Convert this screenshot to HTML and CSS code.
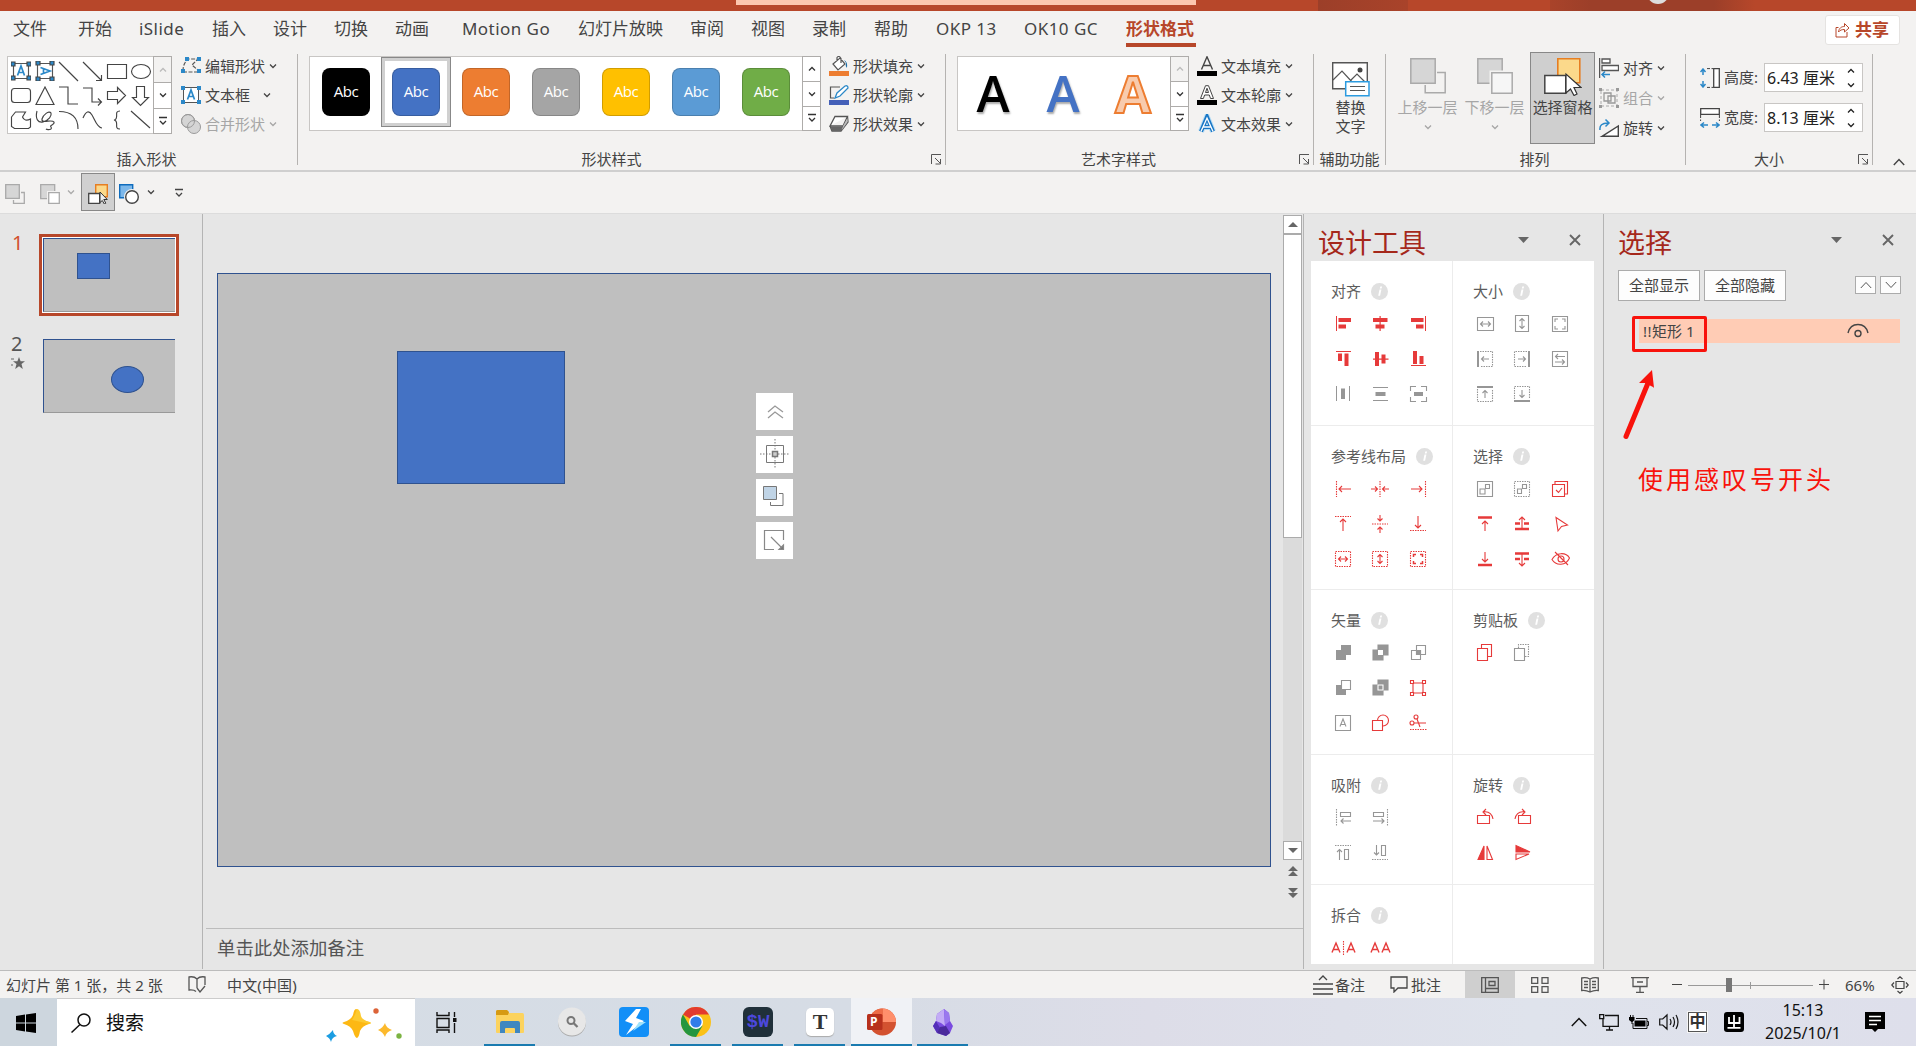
FILE: index.html
```html
<!DOCTYPE html>
<html lang="zh-CN">
<head>
<meta charset="utf-8">
<title>PowerPoint</title>
<link rel="stylesheet" href="styles.css">
</head>
<body>
<svg class="defs" width="0" height="0">
  <symbol id="chev" viewBox="0 0 8 8"><path d="M1 2.5l3 3 3-3" fill="none" stroke="currentColor" stroke-width="1.3"/></symbol>
  <symbol id="up" viewBox="0 0 8 8"><path d="M1 5.5l3-3 3 3" fill="none" stroke="currentColor" stroke-width="1.3"/></symbol>
  <symbol id="more" viewBox="0 0 10 10"><path d="M1 1.5h8M2 5l3 3 3-3" fill="none" stroke="currentColor" stroke-width="1.3"/></symbol>
  <symbol id="launch" viewBox="0 0 11 11"><path d="M.5 10V.5H10M4 4l5 5M9.500 5v5h-5" fill="none" stroke="#555"/></symbol>
  <symbol id="tbox" viewBox="0 0 20 20"><path d="M2.500 2.500h15v15h-15z" fill="#fff" stroke="#555"/><path d="M6.500 14.500L10 5l3.500 9.500M7.700 11.500h4.600" fill="none" stroke="#2b88c8" stroke-width="1.700"/><path d="M0 1h4v4H0zM16 1h4v4h-4zM0 15h4v4H0zM16 15h4v4h-4z" fill="#2b88c8"/></symbol>
  <symbol id="info" viewBox="0 0 17 17"><circle cx="8.500" cy="8.500" r="8.500" fill="#e0e0e0"/><path d="M9.300 3.500h1.800l-.5 1.900H8.800zM8.500 6.500h1.900l-1.300 6.200H7.200z" fill="#fff"/></symbol>
  <symbol id="close" viewBox="0 0 12 12"><path d="M1 1l10 10M11 1L1 11" stroke="#666" stroke-width="1.900"/></symbol>
</svg>

<div class="titlebar"><span class="searchbox"></span><span class="shade a"></span><span class="shade b"></span><span class="avatar"></span></div>

<nav class="tabs">
  <span>文件</span><span>开始</span><span class="lat">iSlide</span><span>插入</span><span>设计</span><span>切换</span><span>动画</span><span class="lat">Motion Go</span><span>幻灯片放映</span><span>审阅</span><span>视图</span><span>录制</span><span>帮助</span><span class="lat">OKP 13</span><span class="lat">OK10 GC</span><span class="active">形状格式</span>
  <button class="share"><svg width="15" height="16" viewBox="0 0 15 16"><path d="M3.500 5.500H1v9.500h11v-5M3.500 10c.5-4 3-5.500 6-5.500V1.500l4.500 4.500-4.500 4V7.500C7 7.500 5 8 3.500 10z" fill="none" stroke="#b7472a"/></svg>共享</button>
</nav>

<section class="ribbon">
  <div class="group g1">
    <div class="content">
      <div class="gallery shapes">
        <svg width="145" height="76" viewBox="0 0 145 76" fill="none" stroke="#444" stroke-width="1.150">
          <use href="#tbox" x="3" y="4" width="20" height="20"/><g transform="rotate(90 37 14)"><use href="#tbox" x="27" y="4" width="20" height="20"/></g>
          <path d="M51 5l19 19M75 5l18 18M88 23.500h5.500V18M99.500 7.500h19v14h-19z"/><ellipse cx="133" cy="14.500" rx="9.500" ry="7"/>
          <rect x="3.500" y="31.500" width="19" height="14" rx="3"/><path d="M37 30l9 17.500H28zM51 30h9v17h10M75 31h9v14h9M90 41.500l3.500 3.500-3.500 3.500M99.500 34.500h10v-4l8 8-8 8v-4h-10zM128.500 29.500h8v11h4l-8 8-8-8h4z"/>
          <path d="M3.500 60l4-5h10l-3 5q2 5 8 2v8l-2 1.500h-14l-3-2zM29 54c-2 8 1 12 6 11 6-2 9-6 8-9-2-3-8 2-9 6-1 5 10 0 12 3 1 3-5 3-3 5 2 3-4 3-5 2M51 54.500c12 0 19 5 19 17.500M75 61c3-7 6-8 9-3s5 13 10 13M112 54c-7 0 0 8-6 9 6 1-1 9 6 9M123 54l19 17"/>
        </svg>
        <div class="scroll"><i class="off"><svg width="8" height="8"><use href="#up"/></svg></i><i><svg width="8" height="8"><use href="#chev"/></svg></i><i><svg width="10" height="10"><use href="#more"/></svg></i></div>
      </div>
      <div class="cmds">
        <div class="cmd"><svg width="20" height="20" viewBox="0 0 20 20"><path d="M2 15c0-6 2-9 5-12h10l-6 6 7 6M2 16h16" fill="none" stroke="#555" stroke-width="1.200" stroke-dasharray="4 1.500"/><path d="M4 1h4v4H4zM16 1h4v4h-4zM0 13h4v4H0zM16 13h4v4h-4z" fill="#2b88c8"/></svg><span>编辑形状</span><svg width="8" height="8"><use href="#chev"/></svg></div>
        <div class="cmd wide"><svg width="20" height="20"><use href="#tbox"/></svg><span>文本框</span><svg width="8" height="8"><use href="#chev"/></svg></div>
        <div class="cmd off"><svg width="20" height="20" viewBox="0 0 20 20" fill="#d5d5d5" stroke="#9a9a9a"><circle cx="7" cy="7" r="6.500"/><circle cx="13" cy="13" r="6.500"/><circle cx="7" cy="7" r="6.500" fill="none"/></svg><span>合并形状</span><svg width="8" height="8"><use href="#chev"/></svg></div>
      </div>
    </div>
    <div class="label"><span>插入形状</span></div>
  </div>

  <div class="group g2">
    <div class="content">
      <div class="gallery styles">
        <b class="sw k"><em>Abc</em></b><b class="sw bl sel"><em>Abc</em></b><b class="sw or"><em>Abc</em></b><b class="sw gy"><em>Abc</em></b><b class="sw ye"><em>Abc</em></b><b class="sw lb"><em>Abc</em></b><b class="sw gr"><em>Abc</em></b>
        <div class="scroll"><i><svg width="8" height="8"><use href="#up"/></svg></i><i><svg width="8" height="8"><use href="#chev"/></svg></i><i><svg width="10" height="10"><use href="#more"/></svg></i></div>
      </div>
      <div class="cmds">
        <div class="cmd"><svg width="20" height="20" viewBox="0 0 20 20"><path d="M4 8l7-6 5 6-7 6zM8 5V1.500Q10-1 12 2.500V7" fill="#fff" stroke="#555" stroke-width="1.200"/><path d="M15 4q4 2 3 8-2-2-1-5z" fill="#1b6ea8"/><path d="M0 15h20v5H0z" fill="#ed7d31"/></svg><span>形状填充</span><svg width="8" height="8"><use href="#chev"/></svg></div>
        <div class="cmd"><svg width="20" height="20" viewBox="0 0 20 20"><path d="M11 2H1.500v11H5" fill="none" stroke="#555" stroke-width="1.200"/><path d="M6 13l2-5 8-7q3-1 3 2l-8 8z" fill="#fff" stroke="#2b88c8" stroke-width="1.300"/><path d="M0 15h20v5H0z" fill="#4460b8"/></svg><span>形状轮廓</span><svg width="8" height="8"><use href="#chev"/></svg></div>
        <div class="cmd"><svg width="20" height="20" viewBox="0 0 20 20"><path d="M1 12L6 2.500h12.500L14 12zM1 12l2 5h9l7-9-.5-5.500M14 12l-2 5" fill="#fff" stroke="#555" stroke-width="1.300"/><path d="M1.500 12.500h12L12 17H3z" fill="#666"/><path d="M14 12l4.500-8v4L12.500 16.500z" fill="#bbb"/></svg><span>形状效果</span><svg width="8" height="8"><use href="#chev"/></svg></div>
      </div>
    </div>
    <div class="label"><span>形状样式</span><svg width="11" height="11"><use href="#launch"/></svg></div>
  </div>

  <div class="group g3">
    <div class="content">
      <div class="gallery wordart">
        <b class="wa w1">A</b><b class="wa w2">A</b><b class="wa w3">A</b>
        <div class="scroll"><i class="off"><svg width="8" height="8"><use href="#up"/></svg></i><i><svg width="8" height="8"><use href="#chev"/></svg></i><i><svg width="10" height="10"><use href="#more"/></svg></i></div>
      </div>
      <div class="cmds">
        <div class="cmd"><svg width="20" height="20" viewBox="0 0 20 20"><path d="M4.500 13.500L10 .8l5.500 12.700M6.500 9.500h7" fill="none" stroke="#444" stroke-width="1.400"/><path d="M0 15h20v5H0z"/></svg><span>文本填充</span><svg width="8" height="8"><use href="#chev"/></svg></div>
        <div class="cmd"><svg width="20" height="20" viewBox="0 0 20 20"><path d="M3.500 13.500L8.500.7h3l5 12.800h-3L12.300 10H7.600l-1.200 3.500zM8.500 7.500h3L10 3.200z" fill="#fff" stroke="#444"/><path d="M0 15h20v5H0z"/></svg><span>文本轮廓</span><svg width="8" height="8"><use href="#chev"/></svg></div>
        <div class="cmd"><svg width="20" height="20" viewBox="0 0 20 20"><path d="M4 17.500L10 3l6 14.500M6.500 13h7" fill="none" stroke="#b6ddf5" stroke-width="6"/><path d="M4 17.500L10 3l6 14.500M6.500 13h7" fill="none" stroke="#1976c5" stroke-width="4"/><path d="M4 17.500L10 4l6 13.500M6.500 13h7" fill="none" stroke="#fff" stroke-width="1.300"/></svg><span>文本效果</span><svg width="8" height="8"><use href="#chev"/></svg></div>
      </div>
    </div>
    <div class="label"><span>艺术字样式</span><svg width="11" height="11"><use href="#launch"/></svg></div>
  </div>

  <div class="group g4">
    <div class="content">
      <div class="big alt"><svg width="38" height="35" viewBox="0 0 38 35"><path d="M.7.7h34.600v26H.7z" fill="#fff" stroke="#555" stroke-width="1.400"/><path d="M1 18l9-9 11 12M19 18l6-6 9 9" fill="none" stroke="#555" stroke-width="1.200"/><circle cx="28" cy="8" r="2.500" fill="#444"/><path d="M13.700 19.700H37v14H13.700z" fill="#fff" stroke="#2b9be0" stroke-width="1.500"/><path d="M18 24.500h15M18 28.500h15" stroke="#555"/></svg><span>替换<br>文字</span></div>
    </div>
    <div class="label"><span>辅助功能</span></div>
  </div>

  <div class="group g5">
    <div class="content">
      <div class="big off"><svg width="36" height="36" viewBox="0 0 36 36"><path d="M.8.800h24.400v24.400H.8z" fill="#d6d6d6" stroke="#aaa" stroke-width="1.500"/><path d="M27 14.500h8.200v20.200h-20V27" fill="none" stroke="#aaa" stroke-width="1.500"/></svg><span>上移一层</span><svg width="8" height="8"><use href="#chev"/></svg></div>
      <div class="big off"><svg width="36" height="36" viewBox="0 0 36 36"><path d="M.8.800h24.400v24.400H.8z" fill="#d6d6d6" stroke="#aaa" stroke-width="1.500"/><path d="M12.500 12.500h24v24h-24z" fill="#f3f2f1"/><path d="M14.800 14.800h20.400v20.400H14.800z" fill="#f6f6f6" stroke="#aaa" stroke-width="1.500"/></svg><span>下移一层</span><svg width="8" height="8"><use href="#chev"/></svg></div>
      <div class="big on"><svg width="38" height="38" viewBox="0 0 38 38"><path d="M13.800.8h22v24h-22z" fill="#fbd98b" stroke="#e67e22" stroke-width="1.600"/><path d="M.8 17.500h21v17.700H.8z" fill="#fff" stroke="#444" stroke-width="1.500"/><path d="M22 16v19l4.500-4 3.500 6.500 3-1.500-3-6.500h7z" fill="#fff" stroke="#333" stroke-width="1.200"/></svg><span>选择窗格</span></div>
      <div class="cmds arrange">
        <div class="cmd"><svg width="20" height="20" viewBox="0 0 20 20"><path d="M.6 0v20M3 1h8v4H3zM3 7.500h16.500v5H3z" fill="#fff" stroke="#555" stroke-width="1.300"/><path d="M11 16.500H3M6 13.500l-3 3 3 3" fill="none" stroke="#2b88c8" stroke-width="1.500"/></svg><span>对齐</span><svg width="8" height="8"><use href="#chev"/></svg></div>
        <div class="cmd off"><svg width="20" height="20" viewBox="0 0 20 20"><path d="M2 2h16v16H2z" fill="none" stroke="#aaa" stroke-dasharray="3 2"/><path d="M5 5h7v8H5zM9 8h7v7H9z" fill="none" stroke="#999" stroke-width="1.300"/><path d="M0 0h3v3H0zM17 0h3v3h-3zM0 17h3v3H0zM17 17h3v3h-3z" fill="#999"/></svg><span>组合</span><svg width="8" height="8"><use href="#chev"/></svg></div>
        <div class="cmd"><svg width="20" height="20" viewBox="0 0 20 20"><path d="M3 18.300L19.300 8v10.300z" fill="#fff" stroke="#444" stroke-width="1.400"/><path d="M1 12Q0 5 9 5M6.500 1.500L10 5 6.500 8.500" fill="none" stroke="#2b88c8" stroke-width="1.500"/></svg><span>旋转</span><svg width="8" height="8"><use href="#chev"/></svg></div>
      </div>
    </div>
    <div class="label"><span>排列</span></div>
  </div>

  <div class="group g6">
    <div class="content sizes">
      <div class="size"><svg width="20" height="20" viewBox="0 0 20 20"><path d="M13.700.700h5.600v18.600h-5.600z" fill="#fff" stroke="#444" stroke-width="1.300"/><path d="M7 .6h6M7 19.400h6" stroke="#444" stroke-dasharray="3 1.500"/><path d="M3 1v6M.5 4L3 1l2.500 3M3 19v-6M.5 16L3 19l2.500-3" fill="none" stroke="#2b88c8" stroke-width="1.500"/></svg><span>高度:</span><div class="field"><span>6.43 厘米</span><i><svg width="8" height="8"><use href="#up"/></svg><svg width="8" height="8"><use href="#chev"/></svg></i></div></div>
      <div class="size"><svg width="20" height="20" viewBox="0 0 20 20"><path d="M.7.700h18.600v5.600H.7z" fill="#fff" stroke="#444" stroke-width="1.300"/><path d="M.6 7v6M19.400 7v6" stroke="#444" stroke-dasharray="3 1.500"/><path d="M1 17h7M4 14.500L1 17l3 2.500M19 17h-7M16 14.500l3 2.500-3 2.500" fill="none" stroke="#2b88c8" stroke-width="1.500"/></svg><span>宽度:</span><div class="field"><span>8.13 厘米</span><i><svg width="8" height="8"><use href="#up"/></svg><svg width="8" height="8"><use href="#chev"/></svg></i></div></div>
    </div>
    <div class="label"><span>大小</span><svg width="11" height="11"><use href="#launch"/></svg></div>
  </div>
  <svg class="collapse" width="12" height="8" viewBox="0 0 12 8"><path d="M.8 7L6 1.500 11.200 7" fill="none" stroke="#444" stroke-width="1.400"/></svg>
</section>

<section class="qat">
  <svg width="20" height="20" viewBox="0 0 20 20"><path d="M.7.700h13.600v13.600H.7z" fill="#d6d6d6" stroke="#aaa" stroke-width="1.300"/><path d="M16 8.500h3.300v10.800H8.500V16" fill="none" stroke="#aaa" stroke-width="1.300"/></svg>
  <svg class="q2" width="20" height="20" viewBox="0 0 20 20"><path d="M.7.700h14v14H.7z" fill="#d6d6d6" stroke="#aaa" stroke-width="1.300"/><path d="M7 7h13v13H7z" fill="#f3f2f1"/><path d="M8.700 8.700h10.600v10.600H8.700z" fill="#fff" stroke="#aaa" stroke-width="1.300"/></svg>
  <svg class="q3" width="8" height="8" color="#aaa"><use href="#chev"/></svg>
  <span class="qon"><svg width="20" height="20" viewBox="0 0 20 20"><path d="M7.700.700h11.600v12H7.700z" fill="#fbd98b" stroke="#e67e22" stroke-width="1.400"/><path d="M.7 9.500h11v9.800H.7z" fill="#fff" stroke="#444" stroke-width="1.300"/><path d="M12 8v10.500l2.300-2 2 3.500 1.500-.8-2-3.700h3.500z" fill="#eee" stroke="#333"/></svg></span>
  <svg class="q4" width="20" height="20" viewBox="0 0 20 20"><path d="M.7.700h13v13H.7z" fill="#7db8ea" stroke="#0f6cbd" stroke-width="1.400"/><circle cx="13" cy="13" r="8" fill="#f3f2f1"/><circle cx="13" cy="13" r="6.300" fill="#fff" stroke="#444" stroke-width="1.400"/></svg>
  <svg class="q5" width="8" height="8"><use href="#chev"/></svg>
  <svg class="q6" width="10" height="10"><use href="#more"/></svg>
</section>

<main class="work">
  <aside class="thumbs">
    <div class="trow first"><span class="num">1</span><div class="tsel"><div class="thumb"><span class="mini-rect"></span></div></div></div>
    <div class="trow"><span class="num">2<svg width="14" height="12" viewBox="0 0 14 12"><path d="M8 0l1.600 4.300H14l-3.500 2.800L11.800 12 8 9.200 4.200 12l1.300-4.900L2 4.300h4.400z" fill="#666"/><path d="M0 2h3M0 8h2" stroke="#666"/></svg></span><div class="thumb"><span class="mini-oval"></span></div></div>
  </aside>
  <section class="editor">
    <div class="stage">
      <div class="canvas"><div class="slide">
        <span class="rect"></span>
        <div class="floats">
          <b><svg width="38" height="38" viewBox="0 0 38 38" fill="none" stroke="#999" stroke-width="1.300"><path d="M12 19l7-6 8 6M12 25l7-6 8 6"/></svg></b>
          <b><svg width="38" height="36" viewBox="0 0 38 36" fill="none" stroke="#777"><path d="M10.500 9.500h17v17h-17z"/><path d="M16.500 15.500h5v5h-5z" fill="#ccc" stroke-width="1.500"/><path d="M19 3v12M19 21v12M4 18h12M22 18h12" stroke-dasharray="1.500 1.500"/></svg></b>
          <b><svg width="38" height="37" viewBox="0 0 38 37" fill="none" stroke="#777"><path d="M7.500 7.500h13v13h-13z" fill="#c0d4e6"/><path d="M23 14.500h4v12H14.500V23"/></svg></b>
          <b><svg width="38" height="36" viewBox="0 0 38 36" fill="none" stroke="#888" stroke-width="1.200"><path d="M18 27.500H8.500v-19h19V18M15 15l11 11"/><path d="M27.500 23v4.500H23z" fill="#777"/></svg></b>
        </div>
      </div></div>
      <div class="vscroll">
        <i class="btn"><svg width="10" height="5"><path d="M0 5l5-5 5 5z" fill="#666"/></svg></i><i class="handle"></i><i class="track"></i><i class="btn"><svg width="10" height="5"><path d="M0 0l5 5 5-5z" fill="#666"/></svg></i>
        <svg class="pg" width="10" height="32" viewBox="0 0 10 32"><path d="M0 5l5-5 5 5zM0 10l5-5 5 5zM0 22l5 5 5-5zM0 27l5 5 5-5z" fill="#666"/></svg>
      </div>
    </div>
    <div class="notes">单击此处添加备注</div>
  </section>

  <aside class="design">
    <header><h2>设计工具</h2><svg class="tri" width="11" height="6"><path d="M0 0h11L5.500 6z" fill="#666"/></svg><svg width="12" height="12"><use href="#close"/></svg></header>
    <div class="tools">
      <div class="cell"><h3>对齐<svg width="17" height="17"><use href="#info"/></svg></h3><div class="icons r">
        <svg viewBox="0 0 20 20"><path d="M3 2h1v15H3zM5.500 4H18v4H5.500zM5.500 10.500H13v4H5.500z" fill="currentColor"/></svg>
        <svg viewBox="0 0 20 20"><path d="M9.500 2h1.200v15H9.500zM3 4h14.500v4H3zM5.500 10.500h9v4h-9z" fill="currentColor"/></svg>
        <svg viewBox="0 0 20 20"><path d="M17 2h1v15h-1zM3 4h12.500v4H3zM8 10.500h7.500v4H8z" fill="currentColor"/></svg>
        <svg viewBox="0 0 20 20"><path d="M3 2h15v1H3zM5 4.500h4V12H5zM11.500 4.500h4V17h-4z" fill="currentColor"/></svg>
        <svg viewBox="0 0 20 20"><path d="M3 9.500h15.500v1.200H3zM5 3h4v14H5zM11.500 5.500h4v9h-4z" fill="currentColor"/></svg>
        <svg viewBox="0 0 20 20"><path d="M3 16h15v1H3zM5 2h4v13H5zM11.500 7h4v8h-4z" fill="currentColor"/></svg>
        <svg class="g" viewBox="0 0 20 20"><path d="M3 2h1v15H3zM16 2h1v15h-1zM8 4.500h4V15H8z" fill="currentColor"/></svg>
        <svg class="g" viewBox="0 0 20 20"><path d="M3 3h15v1H3zM3 16h15v1H3zM5.500 8h10v4h-10z" fill="currentColor"/></svg>
        <svg class="g" viewBox="0 0 20 20"><path d="M2.500 7V2.500H8M13 2.500h5.500V7M18.500 13v4.500H13M8 17.500H2.500V13"/><path d="M6 8h9v4H6z" fill="currentColor" stroke="none"/></svg>
      </div></div>
      <div class="cell"><h3>大小<svg width="17" height="17"><use href="#info"/></svg></h3><div class="icons g">
        <svg viewBox="0 0 20 20"><path d="M2.500 3.500h16v13h-16zM6 10h9M8 7.500L5.500 10 8 12.500M13 7.500l2.500 2.500-2.500 2.500"/></svg>
        <svg viewBox="0 0 20 20"><path d="M3.500 1.500h13v16h-13zM10 5v9M7.500 7L10 4.500 12.500 7M7.500 12l2.500 2.500 2.500-2.500"/></svg>
        <svg viewBox="0 0 20 20"><path d="M2.500 2.500h15v15h-15zM5 8V5h3M12 5h3v3M15 12v3h-3M8 15H5v-3"/></svg>
        <svg viewBox="0 0 20 20"><path d="M3 2v16" stroke-width="2"/><path d="M5 2.500h12.500v15H5" stroke-dasharray="1.500 1"/><path d="M14 10H6.500M9 7.500L6.500 10 9 12.500"/></svg>
        <svg viewBox="0 0 20 20"><path d="M17 2v16" stroke-width="2"/><path d="M15 2.500H2.500v15H15" stroke-dasharray="1.500 1"/><path d="M6 10h7.500M11 7.500l2.500 2.500-2.500 2.500"/></svg>
        <svg viewBox="0 0 20 20"><path d="M2.500 2.500h15v15h-15zM15 7.500H6M8 5L5.500 7.500 8 10M5 13h9M12 10.500l2.500 2.500-2.500 2.500"/></svg>
        <svg viewBox="0 0 20 20"><path d="M2 3h16" stroke-width="2"/><path d="M2.500 5v12.500h15V5" stroke-dasharray="1.500 1"/><path d="M10 14V6.500M7.500 9L10 6.500 12.500 9"/></svg>
        <svg viewBox="0 0 20 20"><path d="M2 17h16" stroke-width="2"/><path d="M2.500 15V2.500h15V15" stroke-dasharray="1.500 1"/><path d="M10 6v7.500M7.500 11l2.500 2.500 2.500-2.500"/></svg>
      </div></div>
      <div class="cell"><h3>参考线布局<svg width="17" height="17"><use href="#info"/></svg></h3><div class="icons r">
        <svg viewBox="0 0 20 20"><path d="M3.500 2v16" stroke-dasharray="1.500 1"/><path d="M18 10H6M9 7l-3 3 3 3"/></svg>
        <svg viewBox="0 0 20 20"><path d="M10 2v16" stroke-dasharray="1.500 1"/><path d="M1 10h6M5 7.500L7.500 10 5 12.500M19 10h-6M15 7.500L12.500 10l2.500 2.500"/></svg>
        <svg viewBox="0 0 20 20"><path d="M17.500 2v16" stroke-dasharray="1.500 1"/><path d="M3 10h11M11 7l3 3-3 3"/></svg>
        <svg viewBox="0 0 20 20"><path d="M2 2.500h16" stroke-dasharray="1.500 1"/><path d="M10 17V5.500M7 8l3-3 3 3"/></svg>
        <svg viewBox="0 0 20 20"><path d="M2 10h16" stroke-dasharray="1.500 1"/><path d="M10 1v6M7.500 4.500L10 7l2.500-2.500M10 19v-6M7.500 15.500L10 13l2.500 2.500"/></svg>
        <svg viewBox="0 0 20 20"><path d="M2 16.500h16" stroke-dasharray="1.500 1"/><path d="M10 2v11.500M7 11l3 3 3-3"/></svg>
        <svg viewBox="0 0 20 20"><path d="M2.500 2.500h15v15h-15z" stroke-dasharray="1.500 1"/><path d="M5.500 10h9M8 7.500L5.500 10 8 12.500M12 7.500l2.500 2.500-2.500 2.500"/></svg>
        <svg viewBox="0 0 20 20"><path d="M2.500 2.500h15v15h-15z" stroke-dasharray="1.500 1"/><path d="M10 5.500v9M7.500 8L10 5.500 12.500 8M7.500 12l2.500 2.500 2.500-2.500"/></svg>
        <svg viewBox="0 0 20 20"><path d="M2.500 2.500h15v15h-15z" stroke-dasharray="1.500 1"/><path d="M5.500 8V5.500H8M12 5.500h2.500V8M14.500 12v2.500H12M8 14.500H5.500V12" stroke-width="1.500"/></svg>
      </div></div>
      <div class="cell"><h3>选择<svg width="17" height="17"><use href="#info"/></svg></h3><div class="icons r">
        <svg class="g" viewBox="0 0 20 20"><path d="M2.500 2.500h15v15h-15zM5 10h5v5H5zM10.500 5.500h4v4h-4z"/></svg>
        <svg class="g" viewBox="0 0 20 20"><path d="M2.500 2.500h15v15h-15z" stroke-dasharray="1.500 1"/><path d="M5.500 10h4v4.500h-4zM10.500 5.500h4v4h-4z"/></svg>
        <svg viewBox="0 0 20 20"><path d="M2.500 5.500h12v12h-12zM5 5V2.500h12.500V15H15M6 11l2.500 2.500L12 9"/></svg>
        <svg viewBox="0 0 20 20"><path d="M3 3.500h14" stroke-width="2.500"/><path d="M10 17V7.500M7 10l3-3 3 3"/></svg>
        <svg viewBox="0 0 20 20"><path d="M3 9.500h5M12 9.500h5M3 15h14" stroke-width="2.500"/><path d="M10 14V3M7 6l3-3 3 3"/></svg>
        <svg viewBox="0 0 20 20"><path d="M6 3.500L17.500 11l-6 1.500L8 17z"/></svg>
        <svg viewBox="0 0 20 20"><path d="M3 16h14" stroke-width="2.500"/><path d="M10 3v9.500M7 10l3 3 3-3"/></svg>
        <svg viewBox="0 0 20 20"><path d="M3 4.500h14M3 10h5M12 10h5" stroke-width="2.500"/><path d="M10 5v12M7 14l3 3 3-3"/></svg>
        <svg viewBox="0 0 20 20"><path d="M2 10.500C6 3 16 3 19.500 9 16 17 6 17 2 10.500zM5 3l13 13"/><circle cx="11" cy="10" r="3"/></svg>
      </div></div>
      <div class="cell"><h3>矢量<svg width="17" height="17"><use href="#info"/></svg></h3><div class="icons g">
        <svg viewBox="0 0 20 20"><path d="M8 2h10v10h-5v5H3V7h5z" fill="currentColor"/></svg>
        <svg viewBox="0 0 20 20"><path d="M8 2h10v10h-5v5H3V7h5z" fill="currentColor"/><path d="M8 7h5v5H8z" fill="#fff" stroke="none"/></svg>
        <svg viewBox="0 0 20 20"><path d="M8.500 2.500h9v9h-9zM3.500 7.500h9v9h-9z"/><path d="M8.500 7.500h4v4h-4z" fill="currentColor"/></svg>
        <svg viewBox="0 0 20 20"><path d="M3 7h10v10H3z" fill="currentColor" stroke="none"/><path d="M8.500 2.500h9v9h-9z" fill="#fff"/></svg>
        <svg viewBox="0 0 20 20"><path d="M8 2h10v10h-5v5H3V7h5z" fill="currentColor"/><path d="M8 7h5v5H8z" stroke="#fff"/></svg>
        <svg class="r" viewBox="0 0 20 20"><path d="M5 5h10v10H5z"/><path d="M2.500 2.500h3v3h-3zM14.500 2.500h3v3h-3zM2.500 14.500h3v3h-3zM14.500 14.500h3v3h-3z" fill="#fff"/></svg>
        <svg viewBox="0 0 20 20"><path d="M2.500 2.500h15v15h-15zM7 13.500L10 6l3 7.500M8 11.500h4"/></svg>
        <svg class="r" viewBox="0 0 20 20"><circle cx="13" cy="7.500" r="5.500"/><path d="M2.500 7.500h10v10h-10z" fill="#fff"/></svg>
        <svg class="r" viewBox="0 0 20 20"><circle cx="4" cy="10" r="2"/><circle cx="8" cy="4" r="2"/><path d="M6 10h12M9 6l3 8"/><path d="M2 16.500h17" stroke-dasharray="1.500 1"/></svg>
      </div></div>
      <div class="cell"><h3>剪贴板<svg width="17" height="17"><use href="#info"/></svg></h3><div class="icons r">
        <svg viewBox="0 0 20 20"><path d="M2.500 5.500h10v12h-10zM6.500 5V1.500h10v12H13"/></svg>
        <svg class="g" viewBox="0 0 20 20"><path d="M2.500 5.500h10v12h-10z"/><path d="M6.500 5V1.500h10v12H13" stroke-dasharray="1.500 1"/></svg>
      </div></div>
      <div class="cell"><h3>吸附<svg width="17" height="17"><use href="#info"/></svg></h3><div class="icons two g">
        <svg viewBox="0 0 20 20"><path d="M3.500 1v17" stroke-dasharray="1.500 1"/><path d="M7.500 4.500h10v4h-10zM18 13H8M10.500 10.500L8 13l2.500 2.500"/></svg>
        <svg viewBox="0 0 20 20"><path d="M17.500 1v17" stroke-dasharray="1.500 1"/><path d="M3.500 4.500h10v4h-10zM3 13h11M11.500 10.500L14 13l-2.500 2.500"/></svg>
        <svg viewBox="0 0 20 20"><path d="M2 2.500h16" stroke-dasharray="1.500 1"/><path d="M11.500 6.500h4v10h-4zM6.500 17V6.500M4 9l2.500-2.500L9 9"/></svg>
        <svg viewBox="0 0 20 20"><path d="M2 16.500h16" stroke-dasharray="1.500 1"/><path d="M11.500 2.500h4v10h-4zM6.500 2v10M4 9.500L6.500 12 9 9.500"/></svg>
      </div></div>
      <div class="cell"><h3>旋转<svg width="17" height="17"><use href="#info"/></svg></h3><div class="icons two r">
        <svg viewBox="0 0 20 20"><path d="M2.500 7.500h12v8h-12zM8 4c6-1 9 2 10 7M11 1L8 4l3 3"/></svg>
        <svg viewBox="0 0 20 20"><path d="M6.500 7.500h12v8h-12zM13 4C7 3 4 6 3 11M10 1l3 3-3 3"/></svg>
        <svg viewBox="0 0 20 20"><path d="M9 3v13.500H3z" fill="currentColor"/><path d="M12 3v13.500h5.500z"/></svg>
        <svg viewBox="0 0 20 20"><path d="M4 2.500V9h14z" fill="currentColor"/><path d="M4 16.500V11h13z"/></svg>
      </div></div>
      <div class="cell"><h3>拆合<svg width="17" height="17"><use href="#info"/></svg></h3><div class="icons r split">
        <svg viewBox="0 0 26 20"><path d="M2 14.500L6 5l4 9.500M3.500 11.500h5M17 14.500L21 5l4 9.500M18.500 11.500h5" stroke-width="1.400"/><path d="M13.500 3v15" stroke-dasharray="1.500 1"/></svg>
        <svg viewBox="0 0 26 20"><path d="M4 14.500L8 5l4 9.500M5.500 11.500h5M15 14.500L19 5l4 9.500M16.500 11.500h5" stroke-width="1.400"/></svg>
      </div></div>
      <div class="cell"></div>
    </div>
  </aside>

  <aside class="selection">
    <header><h2>选择</h2><svg class="tri" width="11" height="6"><path d="M0 0h11L5.500 6z" fill="#666"/></svg><svg width="12" height="12"><use href="#close"/></svg></header>
    <div class="btns"><button>全部显示</button><button>全部隐藏</button><button class="sm"><svg width="12" height="8" viewBox="0 0 12 8"><path d="M.8 7L6 1.500 11.200 7" fill="none" stroke="#555"/></svg></button><button class="sm"><svg width="12" height="8" viewBox="0 0 12 8"><path d="M.8 1L6 6.500 11.200 1" fill="none" stroke="#555"/></svg></button></div>
    <div class="item"><span><em>!!</em>矩形 1</span><svg width="22" height="16" viewBox="0 0 22 16" fill="none" stroke="#444" stroke-width="1.400"><path d="M1 10q2-8.500 10-8.500T21 10"/><circle cx="11" cy="10.500" r="3"/></svg></div>
    <span class="mark"></span>
    <svg class="arrow" width="40" height="76" viewBox="0 0 40 76"><path d="M7 70.500L29 17" stroke="#f8130c" stroke-width="5" stroke-linecap="round"/><path d="M33 4L20 17l6 0 8 4 1 1z" fill="#f8130c"/></svg>
    <p class="hand">使用感叹号开头</p>
  </aside>
</main>

<footer class="status">
  <span class="s1">幻灯片 第 1 张，共 2 张</span>
  <svg class="book" width="18" height="17" viewBox="0 0 18 17" fill="none" stroke="#555" stroke-width="1.300"><path d="M9 3Q6 0 1 1v13q5-.500 7 1.500M9 3q3-3 8-2v8M9 3v9M9 12l3 4 5-6"/></svg>
  <span class="s2">中文(中国)</span>
  <div class="sright">
    <svg class="n1" width="20" height="20" viewBox="0 0 20 20" fill="none" stroke="#444" stroke-width="1.300"><path d="M0 9h20M0 14h20M0 19h20M6 5l4-4 4 4"/></svg><span>备注</span>
    <svg class="n2" width="18" height="17" viewBox="0 0 18 17" fill="none" stroke="#444" stroke-width="1.300"><path d="M1 1h16v11H8l-4 4v-4H1z"/></svg><span>批注</span>
    <i class="view on"><svg width="18" height="16" viewBox="0 0 18 16"><path d="M.7.700h16.600v14.600H.7zM4.500 1v14M4.500 11.500H17M8 4.500h6v4H8z"/></svg></i>
    <i class="view"><svg width="18" height="16" viewBox="0 0 18 16"><path d="M.7.700h6v5.600h-6zM11 .7h6v5.600h-6zM.7 9.700h6v5.600h-6zM11 9.700h6v5.600h-6z"/></svg></i>
    <i class="view"><svg width="18" height="16" viewBox="0 0 18 16"><path d="M9 2Q5 0 .7 1v12.500Q5 13 9 15q4-2 8.300-1.500V1Q13 0 9 2zM9 2v13M3 4.500h4M3 7.500h4M3 10.500h4M11 4.500h4M11 7.500h4M11 10.500h4"/></svg></i>
    <i class="view"><svg width="18" height="16" viewBox="0 0 18 16"><path d="M0 .7h18M2 1v8.500h14V1M9 9.500v6M5 15.300h8M6 5h6"/></svg></i>
    <div class="zoom"><svg width="157" height="20" viewBox="0 0 157 20"><path d="M0 9.500h10M147 9.500h10M152 4.500v10" stroke="#444"/><path d="M16 10.500h125M78.500 7v7" stroke="#999"/><path d="M54 3h6v14h-6z" fill="#777"/></svg></div>
    <span class="pct">66%</span>
    <svg class="fit" width="18" height="18" viewBox="0 0 18 18" fill="none" stroke="#444" stroke-width="1.200"><path d="M5 5.500h8v7H5zM6.500 3L9 .8 11.500 3M6.500 15L9 17.200l2.500-2.200M3 6.500L.8 9 3 11.500M15 6.500L17.200 9 15 11.500"/></svg>
  </div>
</footer>

<footer class="taskbar">
  <span class="start"><svg width="20" height="20" viewBox="0 0 20 20"><path d="M0 3l9-1.400v8H0zM10 1.400L20 0v9.600H10zM0 10.500h9v8L0 17zM10 10.500h10V20l-10-1.500z"/></svg></span>
  <div class="find"><svg width="20" height="20" viewBox="0 0 20 20" fill="none" stroke="#111" stroke-width="1.500"><circle cx="13" cy="7" r="6"/><path d="M9 11.500L.5 19.500"/></svg><span>搜索</span>
    <svg class="spark" width="78" height="32" viewBox="0 0 78 32"><path d="M30 2q3 0 4 7 1 4 9 6 2 1 0 2-7 2-9 7-1 6-3 7-2 0-4-7-2-5-9-7-3-1 0-2 7-2 9-7 1-6 3-6z" fill="#fdb813"/><path d="M31 2q3 0 4 7 1 4 9 6 2 1 0 2l-18-4q3-4 5-11z" fill="#fdca30"/><path d="M59 16q1 5 7 7-6 2-7 7-2-5-7-7 5-2 7-7z" fill="#fcb92c"/><path d="M7 23q0 4 4 6-5 1-6 6-1-4-5-6 4-2 7-6z" fill="#1b9de2"/><circle cx="50" cy="4" r="2.700" fill="#dc6338"/><circle cx="73" cy="29" r="2.700" fill="#7cb342"/></svg>
  </div>
  <span class="app w0"><svg width="21" height="21" viewBox="0 0 21 21" fill="none" stroke="#111" stroke-width="1.400"><path d="M1 0v3.500h12V0M1 6.500h12v9H1zM1 21v-3h12v3M18.500 0v5M18.500 11v10"/><path d="M17 6h3.500v4H17z" fill="#111" stroke="none"/></svg></span>
  <span class="app run"><svg width="28" height="24" viewBox="0 0 28 24"><path d="M0 1.500Q0 0 1.500 0H11l2 3h13.500Q28 3 28 5v17q0 1-1 1H1q-1 0-1-1z" fill="#fcd35e"/><path d="M0 1.500Q0 0 1.500 0H11l2 2-1 3H0z" fill="#d69a13"/><path d="M4 23V13q0-2 2-2h16q2 0 2 2v10h-5v-4q0-1-1-1h-8q-1 0-1 1v4z" fill="#3f87bf"/></svg></span>
  <span class="app"><svg width="30" height="30" viewBox="0 0 30 30"><circle cx="15" cy="15.500" r="14" fill="#aaa"/><circle cx="15" cy="14.500" r="14" fill="#e7e7e7"/><circle cx="14" cy="13.500" r="3.500" fill="none" stroke="#777" stroke-width="2"/><path d="M16.500 16l4 4" stroke="#777" stroke-width="2.300"/></svg></span>
  <span class="app"><svg width="30" height="30" viewBox="0 0 30 30"><rect width="30" height="30" rx="4" fill="#128ff7"/><path d="M17 2L6 14l8 3-7 11 18-14-8-3 5-9z" fill="#fff"/><path d="M20 15h7l-13 9z" fill="#9fe2fb"/></svg></span>
  <span class="app run"><svg width="30" height="30" viewBox="0 0 30 30"><circle cx="15" cy="15" r="15" fill="#fbc116"/><path d="M15 15L2 7.500A15 15 0 0 1 28 7.500H15z" fill="#e33b2e"/><path d="M2 7.500A15 15 0 0 0 15 30l6.500-11.200L8.500 18.800z" fill="#25963f"/><circle cx="15" cy="15" r="7" fill="#fff"/><circle cx="15" cy="15" r="5.600" fill="#2f7de9"/></svg></span>
  <span class="app run"><b class="sw-app">$W</b></span>
  <span class="app run"><b class="t-app">T</b></span>
  <span class="app run cur"><svg width="29" height="28" viewBox="0 0 29 28"><circle cx="15.500" cy="14" r="13.500" fill="#d35230"/><path d="M15.500.5A13.500 13.500 0 0 1 29 14H15.500z" fill="#ff8f6b"/><path d="M15.500.5A13.500 13.500 0 0 0 2 14h13.500z" fill="#ed6c47"/><rect y="6" width="15.500" height="16" rx="1.500" fill="#b7301c"/></svg><b>P</b></span>
  <span class="app run"><svg width="20" height="27" viewBox="0 0 20 27"><path d="M11 0l5 4 1 8 3 5-3 7-4 3-9-3-4-7 3-5 1-7z" fill="#7a4be0"/><path d="M11 0L4 5 3 12l5 2 4 3z" fill="#c3acf6"/><path d="M3 12l-3 5 4 7 3-5z" fill="#5430b8"/><path d="M7 18l6-1 4 7-4 3-9-3z" fill="#4a2a9c"/><path d="M11 0l5 4 1 8-5 4z" fill="#9a78ee"/></svg></span>
  <div class="tray">
    <svg width="16" height="10" viewBox="0 0 16 10" fill="none" stroke="#111" stroke-width="1.500"><path d="M.8 9L8 1.500 15.200 9"/></svg>
    <svg class="t2" width="20" height="17" viewBox="0 0 20 17" fill="none" stroke="#111" stroke-width="1.300"><path d="M6 1.500h13.300v10.800H4V5M7 16h7M10.500 12.500V16M.7.700h4v4h-4z"/></svg>
    <svg class="t3" width="20" height="15" viewBox="0 0 20 15"><path d="M5.500 5.500h11v6h-11z"/><path d="M7 3.500h11v10H4V8M18 6.500h1.500v4H18M1.500 0v2M4 0v2" fill="none" stroke="#111"/><path d="M0 2h5.500v3L3.500 7v2h-1V7L0 5z"/></svg>
    <svg class="t4" width="20" height="18" viewBox="0 0 20 18" fill="none" stroke="#111" stroke-width="1.200"><path d="M.7 6h3L8 2v14l-4.300-4h-3zM11 6q2 3 0 6M14 4q3 5 0 10M17 2q4 7 0 14"/></svg>
    <b class="ime">中</b>
    <svg class="t5" width="20" height="20" viewBox="0 0 20 20"><rect width="20" height="20" rx="3"/><path d="M10 3v12.500M5 5v6h10.500V5M3.500 15.800h13" fill="none" stroke="#fff" stroke-width="1.800"/></svg>
    <div class="clock">15:13<br>2025/10/1</div>
    <svg class="t6" width="20" height="20" viewBox="0 0 20 20"><path d="M0 0h20v17h-7l-3 3-3-3H0z"/><path d="M4 4.500h12M4 8.500h12M4 12.500h8" stroke="#fff" stroke-width="1.300"/></svg>
  </div>
</footer>
</body>
</html>
```

FILE: styles.css
```css
* { box-sizing: border-box; }
body { margin: 0; width: 1916px; height: 1046px; overflow: hidden; background: #e6e6e6; color: #444; font: 15px/20px "Noto Sans", "Noto Sans CJK SC", sans-serif; display: flex; flex-direction: column; }
svg { display: block; flex: none; }
.defs { position: absolute; }
i, em { font-style: normal; }
button { font: inherit; color: inherit; padding: 0; }
h2, h3, p { margin: 0; font-weight: 400; }

.titlebar { height: 11px; flex: none; background: #b7472a; position: relative; overflow: hidden; }
.searchbox { display: block; width: 460px; height: 5px; margin-left: 736px; background: #fcc6ae; }
.shade { position: absolute; top: 0; height: 11px; background: #9c3f29; }
.shade.a { left: 1318px; width: 90px; background: linear-gradient(90deg, #9c3f29, #a9432a); }
.shade.b { left: 1550px; width: 205px; background: linear-gradient(90deg, #a9432a, #9c3f29 20%, #9c3f29 80%, #b7472a); }
.avatar { position: absolute; left: 1647px; top: -18px; width: 22px; height: 22px; border-radius: 50%; background: #ddd; }

.tabs { height: 39px; flex: none; background: #f3f2f1; display: grid; grid-template-columns: 65px 61px 73px 61px 61px 61px 67px 116px 112px 61px 61px 62px 62px 88px 102px 70px 1fr; padding-left: 13px; font-size: 17px; line-height: 36px; white-space: nowrap; }
.lat { letter-spacing: .45px; }
.tabs .active { font-weight: 700; color: #b7472a; border-bottom: 4px solid #b7472a; height: 36px; }
.share { justify-self: end; margin: 4px 16px 0 0; width: 75px; height: 30px; background: #fff; border: 1px solid #e5e3e1; border-radius: 3px; color: #b7472a; font-weight: 700; display: flex; align-items: center; gap: 5px; padding-left: 9px; line-height: 24px; }

.ribbon { height: 122px; flex: none; background: #f3f2f1; border-bottom: 2px solid #cfcfcf; display: flex; padding-top: 4px; }
.group { height: 111px; border-right: 1px solid #b5b3b1; display: flex; flex-direction: column; flex: none; }
.content { height: 93px; flex: none; display: flex; }
.label { display: grid; grid-template-columns: 100%; justify-items: center; line-height: 20px; height: 20px; flex: none; margin-top: 2px; }
.label > * { grid-area: 1 / 1; }
.label > svg { justify-self: end; align-self: end; margin: 0 3px 4px 0; }
.g1 { width: 298px; padding-left: 7px; }
.g1 .label { margin-left: -11px; }
.g2 { width: 648px; padding-left: 11px; }
.g2 .label { margin-left: -31px; }
.g3 { width: 368px; padding-left: 11px; }
.g3 .label { margin-left: -33px; }
.g4 { width: 72px; }
.g5 { width: 300px; }
.g5 .label { margin-left: -2px; }
.g6 { width: 187px; }
.g6 .label { margin-left: -20px; }
.gallery { display: flex; background: #fff; border: 1px solid #c8c6c4; margin-top: 2px; height: 75px; flex: none; }
.shapes { width: 165px; height: 78px; }
.shapes + .cmds { padding-left: 9px; }
.styles { width: 512px; padding-left: 12px; }
.wordart { width: 232px; }
.scroll { width: 19px; margin: -1px -1px -1px auto; display: grid; grid-template-rows: 1fr 1fr 1fr; border: 1px solid #aeacaa; flex: none; color: #333; }
.scroll i { display: flex; align-items: center; justify-content: center; }
.scroll i + i { border-top: 1px solid #aeacaa; }
.scroll .off { background: #f3f2f1; color: #bbb; }
.cmds { padding: 2px 0 0 8px; display: flex; flex-direction: column; }
.cmd { height: 29px; padding-bottom: 9px; display: flex; align-items: center; gap: 4px; white-space: nowrap; }
.cmd > span { margin-top: -1px; }
.cmd.wide span { margin-right: 9px; }
.off { color: #a6a6a6; }
.sw { width: 48px; height: 48px; border-radius: 8px; margin-top: 11px; border: 1px solid rgba(0,0,0,.18); color: #fff; text-align: center; font: 15px/44px "Open Sans", sans-serif; letter-spacing: -.4px; flex: none; position: relative; }
.sw + .sw { margin-left: 22px; }
.sw.sel::before { content: ""; position: absolute; inset: -12px; border: 1px solid #888; box-shadow: inset 0 0 0 3px #d0d0d0; }
.k { background: #000; } .bl { background: #4472c4; } .or { background: #ed7d31; } .gy { background: #a5a5a5; } .ye { background: #ffc000; } .lb { background: #5b9bd5; } .gr { background: #70ad47; }
.wa { width: 70px; text-align: center; font: 600 50px/72px "Open Sans", sans-serif; flex: none; color: #000; text-shadow: 1px 2px 2px #aaa; }
.w2 { color: #4472c4; }
.w3 { color: #f8cbad; -webkit-text-stroke: 2px #ed7d31; text-shadow: none; font-weight: 700; font-size: 52px; }

.big { display: flex; flex-direction: column; align-items: center; white-space: nowrap; flex: none; line-height: 19px; }
.big span { margin-top: 1px; text-align: center; }
.alt { width: 72px; padding: 8px 0 0 1px; }
.big.off { width: 67px; padding-top: 4px; }
.big.off span { margin-top: 4px; }
.big.off > svg:last-child { margin-top: 6px; }
.big.off:first-child { margin-left: 8px; }
.big.on { width: 65px; height: 92px; margin: -2px 0 0 2px; background: #cfcfcf; border: 1px solid #888; padding-top: 5px; letter-spacing: -.1px; }
.big.on span { margin-top: 2px; }
.arrange { padding: 4px 0 0 4px; }
.arrange .cmd { height: 30px; padding-bottom: 10px; }
.sizes { flex-direction: column; padding: 9px 0 0 14px; gap: 11px; }
.size { display: flex; align-items: center; height: 29px; gap: 4px; }
.size > span { width: 36px; margin-top: -1px; }
.field { width: 99px; height: 29px; background: #fff; border: 1px solid #c8c6c4; display: flex; justify-content: space-between; align-items: center; padding: 0 7px 0 2px; font-size: 16px; color: #222; }
.field i { display: flex; flex-direction: column; gap: 6px; }
.collapse { margin: 104px 0 0 20px; }

.qat { height: 42px; flex: none; background: #f3f2f1; border-bottom: 1px solid #dcdcdc; display: flex; align-items: flex-start; padding: 12px 0 0 5px; }
.q2 { margin-left: 15px; } .q3 { margin: 4px 0 0 7px; }
.qon { width: 34px; height: 38px; margin: -11px 0 0 6px; background: #d0d0d0; border: 1px solid #888; padding: 10px 0 0 6px; }
.q4 { margin-left: 4px; } .q5 { margin: 4px 0 0 8px; } .q6 { margin: 4px 0 0 19px; }

.work { height: 757px; flex: none; display: flex; border-bottom: 1px solid #bcbcbc; }
.thumbs { width: 203px; height: 755px; border-right: 1px solid #b4b4b4; padding-top: 20px; flex: none; }
.trow { display: flex; height: 75px; }
.trow.first { height: 82px; margin-bottom: 23px; }
.num { width: 43px; padding: 0 0 0 11px; font-size: 20px; line-height: 10px; color: #555; flex: none; }
.num svg { margin-top: 8px; }
.first .num { width: 39px; color: #d2502d; line-height: 18px; padding-left: 12px; }
.tsel { border: 3px solid #b7472a; background: #fff; padding: 1px; width: 140px; height: 82px; }
.thumb { width: 132px; height: 74px; background: #bfbfbf; border: 1px solid #2f528f; border-right: 0; border-bottom-color: #999; position: relative; }
.thumb > span { position: absolute; background: #4472c4; border: 1px solid #2f528f; width: 33px; }
.mini-rect { left: 33px; top: 14px; height: 26px; }
.mini-oval { left: 67px; top: 26px; height: 27px; border-radius: 50%; }
.editor { width: 1101px; height: 755px; border-right: 1px solid #b4b4b4; flex: none; display: flex; flex-direction: column; }
.stage { height: 714px; display: flex; flex: none; }
.canvas { width: 1080px; padding: 59px 0 0 14px; }
.slide { width: 1054px; height: 594px; background: #bfbfbf; border: 1px solid #2f528f; position: relative; }
.rect { position: absolute; left: 179px; top: 77px; width: 168px; height: 133px; background: #4472c4; border: 1px solid #2f528f; }
.floats { position: absolute; left: 538px; top: 119px; display: flex; flex-direction: column; gap: 6px; }
.floats b { background: #fff; width: 37px; height: 37px; overflow: hidden; }
.vscroll { width: 19px; padding-top: 1px; }
.vscroll i { display: flex; align-items: center; justify-content: center; background: #fff; border: 1px solid #ababab; }
.btn { height: 19px; }
.handle { height: 304px; }
.vscroll .track { height: 303px; background: #dbdbdb; border: 0; }
.pg { margin: 6px 0 0 5px; }
.notes { height: 41px; margin-left: 3px; border-top: 1px solid #bcbcbc; padding: 9px 0 0 11px; font-size: 18.4px; color: #555; }

aside header { display: flex; align-items: center; height: 47px; }
h2 { font-size: 27px; line-height: 40px; color: #a5281b; margin-top: 11px; }
header > svg { margin-top: 5px; }
.design { width: 300px; height: 755px; border-right: 1px solid #b4b4b4; padding-left: 7px; flex: none; }
.design header h2 { margin-left: 7px; width: 200px; }
.tri { margin-right: 40px; }
.tools { width: 283px; height: 703px; background: #fff; display: grid; grid-template-columns: 142px 141px; grid-template-rows: 165px 164px 165px 130px 79px; }
.cell { padding: 20px 0 0 20px; border-bottom: 1px solid #ececec; }
.cell:nth-child(odd) { border-right: 1px solid #ececec; }
.cell:nth-child(n+9) { border-bottom: 0; }
h3 { display: flex; align-items: center; gap: 10px; font-size: 15px; line-height: 20px; color: #5c5c5c; }
.icons { display: grid; grid-template-columns: 37px 38px 38px; grid-auto-rows: 35px; margin: 5px 0 0 -7px; place-items: center; fill: none; stroke-width: 1.1; }
.icons.two { grid-template-columns: 37px 38px; justify-content: start; }
.icons svg { width: 20px; height: 20px; stroke: currentColor; }
.icons svg path[fill="currentColor"]:only-child { stroke: none; }
.r, .icons svg.r { color: #e63a3a; }
.g, .icons svg.g { color: #969696; }
.icons.split svg { width: 26px; }

.selection { flex: 1; padding: 0 14px; position: relative; }
.selection header h2 { width: 213px; }
.btns { display: flex; align-items: center; gap: 4px; margin-top: 8px; height: 32px; }
.btns button { width: 82px; height: 31px; background: #fdfdfd; border: 1px solid #ababab; }
.btns .sm { width: 21px; height: 18px; display: flex; align-items: center; justify-content: center; margin-top: -1px; }
.btns button:nth-child(3) { margin-left: 65px; }
.item { display: flex; align-items: center; justify-content: space-between; height: 24px; width: 261px; margin: 18px 0 0 21px; background: #ffccb5; padding: 0 31px 0 4px; }
.item em { letter-spacing: .5px; }
.mark { position: absolute; left: 28px; top: 102px; width: 75px; height: 36px; border: 3px solid #f8130c; border-radius: 2px; }
.arrow { position: absolute; left: 15px; top: 152px; }
.hand { position: absolute; left: 34px; top: 247px; font-size: 25px; line-height: 36px; letter-spacing: 3px; color: #f8130c; white-space: nowrap; }

.status { height: 27px; flex: none; background: #f3f2f1; display: flex; align-items: center; font-size: 15px; white-space: nowrap; }
.s1 { width: 188px; padding-left: 6px; }
.s2 { margin-left: 21px; letter-spacing: .15px; }
.sright { margin-left: auto; display: flex; align-items: center; width: 603px; height: 27px; font-size: 15px; }
.n1 { margin-right: 2px; } .n2 { margin: 0 3px 0 25px; }
.view { width: 50px; height: 27px; display: flex; align-items: center; justify-content: center; fill: none; stroke: #555; stroke-width: 1.3; }
.n2 + span { margin-right: 24px; }
.view.on { background: #cfcfcf; }
.zoom { margin-left: 7px; }
.pct { margin-left: 16px; width: 46px; }

.taskbar { height: 48px; flex: none; background: linear-gradient(90deg, #d5dde5, #d6dce5 45%, #dddde8 60%, #dfe3ec 80%, #dedfeb); display: flex; color: #111; }
.start { width: 57px; background: #cdd6de; padding: 15px 0 0 16px; flex: none; }
.find { width: 358px; background: #fff; border-top: 1px solid #ccc; display: flex; align-items: center; padding-left: 14px; font-size: 19px; flex: none; }
.find span { margin-left: 15px; }
.spark { margin-left: 182px; overflow: visible; }
.app { width: 62px; display: flex; align-items: center; justify-content: center; position: relative; flex: none; }
.app.run::after { content: ""; position: absolute; left: 5px; right: 6px; bottom: 0; height: 2px; background: #1a7bb0; }
.w0 + .app { margin-left: 2px; }
.cur { background: #f0f2f6; width: 61px; }
.app.cur.run::after { left: 0; right: 0; }
.cur b { position: absolute; left: 19px; top: 14px; color: #fff; font: 700 12px/20px "Open Sans", sans-serif; }
.sw-app { width: 30px; height: 30px; border-radius: 6px; background: #20303a; color: #4c48dc; font: 700 19px/30px "Liberation Mono", monospace; text-align: center; }
.t-app { width: 28px; height: 28px; border-radius: 5px; background: #fff; color: #333; font: 700 22px/28px "Liberation Serif", serif; text-align: center; box-shadow: 0 1px 1px #aaa; }
.tray { margin-left: auto; width: 345px; display: flex; align-items: center; flex: none; }
.t2 { margin-left: 12px; } .t3 { margin-left: 10px; } .t4 { margin-left: 10px; }
.ime { width: 19px; height: 20px; margin-left: 9px; background: #fff; border: 1px solid #555; outline: 1px solid #f4f4f4; color: #333; font-size: 16px; line-height: 17px; text-align: center; display: flex; justify-content: center; }
.t5 { margin-left: 17px; }
.clock { margin-left: 21px; width: 76px; text-align: center; font-size: 16px; line-height: 23px; }
.t6 { margin-left: 24px; }
```
